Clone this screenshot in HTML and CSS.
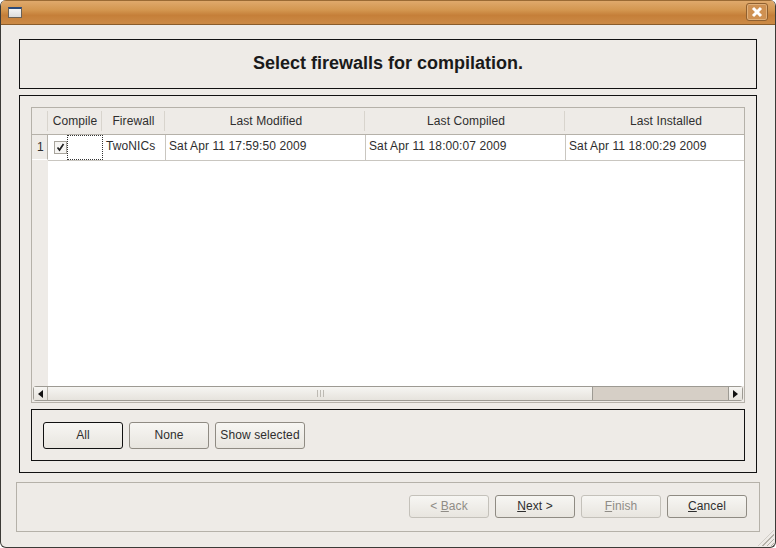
FILE: index.html
```html
<!DOCTYPE html>
<html lang="en">
<head>
    <meta charset="UTF-8">
    <title>Select firewalls for compilation</title>
    <link rel="stylesheet" href="styles.css">
</head>
<body>

<div class="window">
    <div class="titlebar">
        <div class="window-icon"></div>
        <div class="close-btn">
            <svg width="12" height="12" viewBox="0 0 12 12"><path d="M2 2 L10 10 M10 2 L2 10" stroke="#fff" stroke-width="3" fill="none"/></svg>
        </div>
    </div>

    <div class="content">
        <div class="page-title">Select firewalls for compilation.</div>

        <div class="main-box">
            <div class="table-frame">
                <div class="table-head">
                    <div class="head-cell corner"></div>
                    <div class="head-cell col-compile">Compile</div>
                    <div class="head-cell col-firewall">Firewall</div>
                    <div class="head-cell col-date">Last Modified</div>
                    <div class="head-cell col-date">Last Compiled</div>
                    <div class="head-cell col-date">Last Installed</div>
                </div>
                <div class="table-body">
                    <div class="row-gutter">
                        <div class="row-num">1</div>
                    </div>
                    <div class="rows">
                        <div class="row">
                            <div class="cell col-compile check-cell">
                                <span class="checkbox">
                                    <svg width="11" height="11" viewBox="0 0 11 11"><path d="M2.5 5.5 L4.5 8 L8.5 2" stroke="#222" stroke-width="1.7" fill="none"/></svg>
                                </span>
                                <span class="focus-box"></span>
                            </div>
                            <div class="cell col-firewall">TwoNICs</div>
                            <div class="cell col-date">Sat Apr 11 17:59:50 2009</div>
                            <div class="cell col-date">Sat Apr 11 18:00:07 2009</div>
                            <div class="cell col-date">Sat Apr 11 18:00:29 2009</div>
                        </div>
                    </div>
                </div>
                <div class="hscroll">
                    <div class="scroll-btn"><span class="arrow-left"></span></div>
                    <div class="scroll-thumb"><span class="grip"></span></div>
                    <div class="scroll-trough"></div>
                    <div class="scroll-btn right"><span class="arrow-right"></span></div>
                </div>
            </div>

            <div class="select-box">
                <button class="btn btn-default">All</button>
                <button class="btn">None</button>
                <button class="btn btn-wide">Show selected</button>
            </div>
        </div>

        <div class="nav-frame">
            <button class="btn nav-btn" disabled>&lt; <u>B</u>ack</button>
            <button class="btn nav-btn"><u>N</u>ext &gt;</button>
            <button class="btn nav-btn" disabled><u>F</u>inish</button>
            <button class="btn nav-btn"><u>C</u>ancel</button>
        </div>
    </div>

    <div class="resize-grip"></div>
</div>

</body>
</html>
```

FILE: styles.css
```css
/* wizard dialog, Ubuntu Human look */
html, body {
    margin: 0;
    padding: 0;
    background-color: #fff;
}
body {
    font-family: "Liberation Sans", Arial, sans-serif;
    font-size: 12px;
    letter-spacing: 0.1px;
    color: #2e2e2e;
}
.window {
    position: relative;
    width: 776px;
    height: 548px;
    box-sizing: border-box;
    border: 1px solid #3c3b37;
    border-top: 0;
    border-radius: 6px;
    background-color: #eeebe7;
    overflow: hidden;
}

/* title bar */
.titlebar {
    height: 25px;
    box-sizing: border-box;
    display: flex;
    align-items: center;
    justify-content: space-between;
    padding: 0 7px 1px 7px;
    background: linear-gradient(#dfa96c, #d3964f 40%, #c57f39 62%, #cc8a45);
    border-top: 1px solid #9a6a34;
    border-bottom: 1px solid #8a5c2a;
}
.window-icon {
    width: 12px;
    height: 8px;
    border: 1px solid #6b6257;
    border-top: 2px solid #2c4a7a;
    background: linear-gradient(#f4f4f4, #dcdcdc);
}
.close-btn {
    width: 22px;
    height: 18px;
    box-sizing: border-box;
    display: flex;
    align-items: center;
    justify-content: center;
    border: 1px solid #8f6030;
    border-radius: 3px;
    background-color: #cf9152;
    box-shadow: inset 0 0 0 1px #e0b07a;
}

.content {
    padding: 14px 15px 0;
}
.page-title {
    height: 50px;
    box-sizing: border-box;
    margin: 0 3px;
    padding-bottom: 2px;
    border: 1px solid #111;
    display: flex;
    align-items: center;
    justify-content: center;
    font-size: 18px;
    font-weight: bold;
    letter-spacing: 0;
    color: #1a1a1a;
}
.main-box {
    height: 378px;
    box-sizing: border-box;
    margin: 6px 3px 0;
    padding: 11px;
    border: 1px solid #111;
}

/* table */
.table-frame {
    height: 296px;
    box-sizing: border-box;
    border: 1px solid #b5b1a9;
    display: flex;
    flex-direction: column;
    overflow: hidden;
}
.table-head {
    height: 27px;
    flex: none;
    display: flex;
    box-sizing: border-box;
    border-bottom: 1px solid #b5b1a9;
}
.head-cell {
    flex: none;
    box-sizing: border-box;
    text-align: center;
    line-height: 27px;
    background: linear-gradient(#d8d4cd, #d8d4cd) right center / 1px 20px no-repeat;
    white-space: nowrap;
}
.head-cell.col-date {
    padding-left: 2px;
}
.corner {
    width: 16px;
}
.col-compile {
    width: 54px;
}
.col-firewall {
    width: 63px;
}
.col-date {
    width: 200px;
}
.table-body {
    flex: 1;
    display: flex;
    min-height: 0;
}
.row-gutter {
    width: 16px;
    flex: none;
    background-color: #eeebe7;
}
.row-num {
    height: 25px;
    line-height: 24px;
    padding-left: 5px;
    box-sizing: border-box;
    border-right: 1px solid #b5b1a9;
    border-bottom: 1px solid #fff;
}
.rows {
    flex: 1;
    background-color: #fff;
}
.row {
    height: 26px;
    box-sizing: border-box;
    display: flex;
    border-bottom: 1px solid #c9c6c0;
}
.cell {
    flex: none;
    box-sizing: border-box;
    height: 25px;
    line-height: 22px;
    padding-left: 3px;
    border-right: 1px solid #c9c6c0;
    white-space: nowrap;
}
.check-cell {
    width: 55px;
    display: flex;
    align-items: center;
    padding: 0 0 0 6px;
    border-right: 0;
}
.checkbox {
    width: 13px;
    height: 13px;
    flex: none;
    box-sizing: border-box;
    border: 1px solid #a8a49c;
    background-color: #f6f5f3;
    display: flex;
    align-items: center;
    justify-content: center;
}
.focus-box {
    flex: 1;
    height: 25px;
    box-sizing: border-box;
    border: 1px dotted #333;
}

/* scrollbar */
.hscroll {
    height: 15px;
    flex: none;
    margin: 0 1px 1px 1px;
    display: flex;
    box-sizing: border-box;
    border: 1px solid #9d9a93;
    border-radius: 3px;
    background-color: #d6cfc6;
}
.scroll-btn {
    width: 14px;
    flex: none;
    display: flex;
    align-items: center;
    justify-content: center;
    background: linear-gradient(#f6f5f2, #e6e3dd);
    border-right: 1px solid #b5b1a9;
    box-sizing: border-box;
}
.scroll-btn.right {
    border-right: 0;
    border-left: 1px solid #9d9a93;
}
.arrow-left {
    border-right: 5px solid #111;
    border-top: 4px solid transparent;
    border-bottom: 4px solid transparent;
}
.arrow-right {
    border-left: 5px solid #111;
    border-top: 4px solid transparent;
    border-bottom: 4px solid transparent;
}
.scroll-thumb {
    width: 545px;
    flex: none;
    display: flex;
    align-items: center;
    justify-content: center;
    box-sizing: border-box;
    background: linear-gradient(#f6f5f2, #e6e3dd);
    border-right: 1px solid #9d9a93;
}
.grip {
    width: 7px;
    height: 7px;
    background: repeating-linear-gradient(90deg, #bdbab3 0 1px, transparent 1px 3px);
}
.scroll-trough {
    flex: 1;
}

/* button rows */
.select-box {
    height: 52px;
    box-sizing: border-box;
    margin-top: 6px;
    padding: 0 11px;
    border: 1px solid #111;
    display: flex;
    align-items: center;
    gap: 6px;
}
.btn {
    width: 80px;
    height: 27px;
    box-sizing: border-box;
    padding: 0;
    font-family: inherit;
    font-size: 12px;
    letter-spacing: inherit;
    color: #2e2e2e;
    border: 1px solid #8f8b83;
    border-radius: 3px;
    background: linear-gradient(#f7f6f3, #e8e5df);
}
.btn-default {
    border-color: #111;
}
.btn-wide {
    width: 90px;
}
.nav-frame {
    height: 50px;
    box-sizing: border-box;
    margin-top: 9px;
    padding: 0 12px 2px;
    border: 1px solid #b5b1a9;
    display: flex;
    align-items: center;
    justify-content: flex-end;
    gap: 6px;
}
.nav-btn {
    height: 23px;
}
.nav-btn:disabled {
    color: #8f8c86;
    border-color: #c4c1ba;
}
.resize-grip {
    position: absolute;
    right: 1px;
    bottom: 1px;
    width: 16px;
    height: 16px;
    background: repeating-linear-gradient(135deg, transparent 0 2px, #b5b1a9 2px 3px);
    clip-path: polygon(100% 0, 100% 100%, 0 100%);
}
```
